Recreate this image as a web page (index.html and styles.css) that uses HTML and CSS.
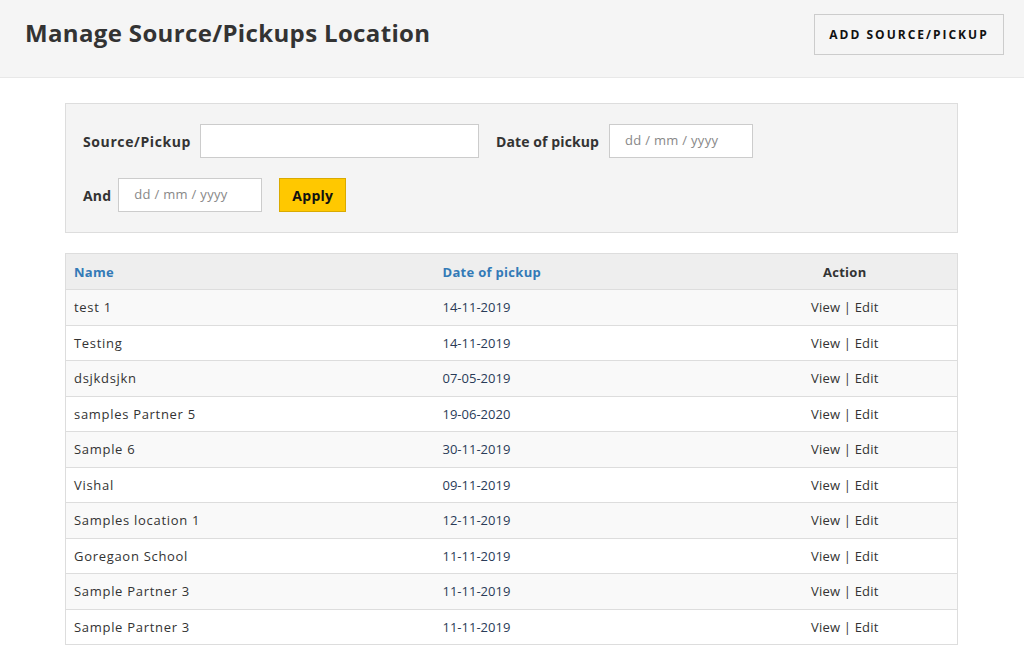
FILE: index.html
```html
<!DOCTYPE html>
<html>
<head>
<meta charset="utf-8">
<link rel="stylesheet" href="styles.css">
</head>
<body>
<header class="topbar">
  <h1 class="title">Manage Source/Pickups Location</h1>
  <button class="add-btn">ADD SOURCE/PICKUP</button>
</header>
<main class="content">
  <form class="filter">
    <div class="filter-row">
      <label class="lbl">Source/Pickup</label>
      <input class="inp inp-wide" type="text">
      <label class="lbl lbl-gap">Date of pickup</label>
      <div class="inp inp-date"><span class="ph">dd / mm / yyyy</span></div>
    </div>
    <div class="filter-row">
      <label class="lbl lbl-and">And</label>
      <div class="inp inp-date"><span class="ph">dd / mm / yyyy</span></div>
      <button class="apply" type="button">Apply</button>
    </div>
  </form>
  <table class="grid">
    <thead>
      <tr><th class="c-name"><a>Name</a></th><th class="c-date"><a>Date of pickup</a></th><th class="c-act">Action</th></tr>
    </thead>
    <tbody>
      <tr><td>test 1</td><td class="d">14-11-2019</td><td class="a">View | Edit</td></tr>
      <tr><td>Testing</td><td class="d">14-11-2019</td><td class="a">View | Edit</td></tr>
      <tr><td>dsjkdsjkn</td><td class="d">07-05-2019</td><td class="a">View | Edit</td></tr>
      <tr><td>samples Partner 5</td><td class="d">19-06-2020</td><td class="a">View | Edit</td></tr>
      <tr><td>Sample 6</td><td class="d">30-11-2019</td><td class="a">View | Edit</td></tr>
      <tr><td>Vishal</td><td class="d">09-11-2019</td><td class="a">View | Edit</td></tr>
      <tr><td>Samples location 1</td><td class="d">12-11-2019</td><td class="a">View | Edit</td></tr>
      <tr><td>Goregaon School</td><td class="d">11-11-2019</td><td class="a">View | Edit</td></tr>
      <tr><td>Sample Partner 3</td><td class="d">11-11-2019</td><td class="a">View | Edit</td></tr>
      <tr><td>Sample Partner 3</td><td class="d">11-11-2019</td><td class="a">View | Edit</td></tr>
    </tbody>
  </table>
</main>
</body>
</html>
```
FILE: styles.css
```css
* { box-sizing: border-box; }
html, body { margin: 0; padding: 0; }
body {
  font-family: "Open Sans", "Liberation Sans", sans-serif;
  font-size: 13px;
  color: #333;
  background: #fff;
  letter-spacing: 0.7px;
}
.topbar {
  height: 78px;
  background: #f5f5f5;
  border-bottom: 1px solid #e8e8e8;
  display: flex;
  align-items: flex-start;
  justify-content: space-between;
  padding: 0 20px 0 25px;
}
.title {
  margin: 16px 0 0;
  font-size: 24px;
  font-weight: 700;
  color: #333;
  letter-spacing: 0.35px;
}
.add-btn {
  margin-top: 14px;
  width: 190px;
  height: 41px;
  background: #f5f5f5;
  border: 1px solid #ccc;
  font-family: inherit;
  font-size: 12px;
  font-weight: 700;
  letter-spacing: 2px;
  color: #111;
  padding: 0;
}
.content {
  padding: 25px 0 0 65px;
  width: 958px;
}
.filter {
  background: #f4f4f4;
  border: 1px solid #ddd;
  padding: 20px 17px 20px 17px;
  display: flex;
  flex-direction: column;
  gap: 20px;
  margin: 0 0 20px;
}
.filter-row {
  display: flex;
  align-items: center;
}
.lbl {
  font-weight: 700;
  font-size: 14px;
  color: #333;
  margin-right: 9px;
  letter-spacing: 0.6px;
}
.lbl-gap { margin-left: 17px; margin-right: 10px; letter-spacing: 0.1px; }
.lbl-and { margin-right: 7px; letter-spacing: 0.2px; }
.inp {
  height: 34px;
  border: 1px solid #ccc;
  background: #fff;
  font-family: inherit;
}
.inp-wide { width: 279px; }
.inp-date {
  width: 144px;
  padding: 6px 15px;
  display: flex;
  align-items: flex-start;
}
.ph { color: #888; font-size: 13px; line-height: 18px; letter-spacing: 0.3px; }
.apply {
  margin-left: 17px;
  width: 67px;
  height: 34px;
  background: #ffc800;
  border: 1px solid #d9aa00;
  font-family: inherit;
  font-size: 14px;
  font-weight: 700;
  color: #111;
  padding: 0;
  letter-spacing: 0.3px;
}
.grid {
  width: 893px;
  border-collapse: collapse;
  border: 1px solid #ddd;
}
.grid th {
  background: #eee;
  height: 36px;
  padding: 0 8px;
  text-align: left;
  font-size: 13px;
  font-weight: 700;
  border-bottom: 1px solid #ddd;
  letter-spacing: 0.3px;
}
.grid th a { color: #337ab7; }
.c-name { width: 369px; }
.c-date { width: 298px; }
.grid th.c-act { text-align: center; color: #333; }
.grid td {
  height: 35.5px;
  padding: 0 8px;
  border-top: 1px solid #ddd;
  font-size: 13px;
  color: #333;
}
.grid tbody tr:nth-child(odd) td { background: #f9f9f9; }
.grid td.d { color: #2a3b58; letter-spacing: 0; }
.grid td.a { text-align: center; letter-spacing: 0.2px; }
```
